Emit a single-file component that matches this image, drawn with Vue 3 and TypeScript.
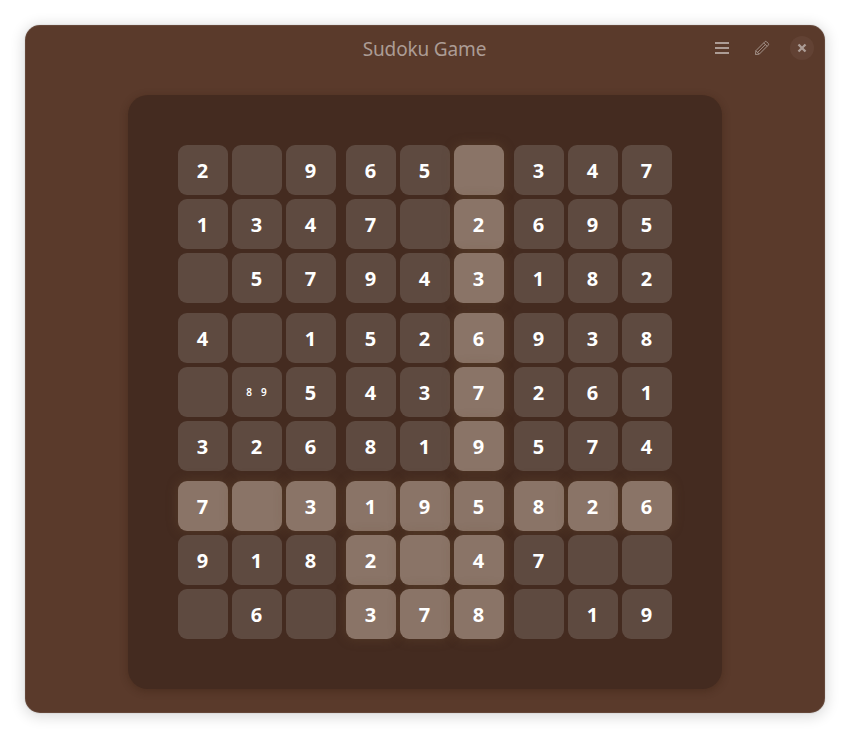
<script setup lang="ts">
interface Cell {
  value: string
  notes: string[]
  lit: boolean
}

const rows: string[] = [
  '2.965.347',
  '1347.2695',
  '.57943182',
  '4.1526938',
  '..5437261',
  '326819574',
  '7.3195826',
  '9182.47..',
  '.6.378.19',
]

const focus = { row: 6, col: 5 }
const notes: Record<string, string[]> = { '4-1': ['8', '9'] }

function isLit(r: number, c: number): boolean {
  const sameBlock =
    Math.floor(r / 3) === Math.floor(focus.row / 3) &&
    Math.floor(c / 3) === Math.floor(focus.col / 3)
  return r === focus.row || c === focus.col || sameBlock
}

const blocks: Cell[][] = Array.from({ length: 9 }, (_, b) =>
  Array.from({ length: 9 }, (_, i) => {
    const r = Math.floor(b / 3) * 3 + Math.floor(i / 3)
    const c = (b % 3) * 3 + (i % 3)
    const ch = rows[r][c]
    return { value: ch === '.' ? '' : ch, notes: notes[`${r}-${c}`] ?? [], lit: isLit(r, c) }
  }),
)
</script>

<template>
  <main class="desktop">
    <section class="window">
      <header class="titlebar">
        <h1 class="title">Sudoku Game</h1>
        <div class="actions">
          <button class="action" aria-label="Menu">
            <svg width="16" height="16" viewBox="0 0 16 16" fill="currentColor">
              <path d="M1 2h14v2H1zM1 7h14v2H1zM1 12h14v2H1z" />
            </svg>
          </button>
          <button class="action" aria-label="Edit notes">
            <svg width="16" height="16" viewBox="0 0 16 16" fill="none" stroke="currentColor" stroke-width="0.9" stroke-linejoin="round">
              <path d="M1.5 14.5l.4-3.8L10.9 1.7q.8-.7 1.6 0l1.8 1.8q.7.8 0 1.6L5.3 14.1zM1.9 10.7l3.4 3.4M9.7 2.9l3.4 3.4" />
              <path d="M3.6 12.4l7.8-7.8" stroke-width="0.8" />
            </svg>
          </button>
          <button class="action close" aria-label="Close">
            <svg width="16" height="16" viewBox="0 0 16 16" fill="none" stroke="currentColor" stroke-width="2.3" stroke-linecap="square">
              <path d="M5.3 5.3l5.4 5.4M10.7 5.3l-5.4 5.4" />
            </svg>
          </button>
        </div>
      </header>
      <div class="board">
        <div v-for="(block, b) in blocks" :key="b" class="block">
          <div v-for="(cell, i) in block" :key="i" class="cell" :class="{ lit: cell.lit }">
            <span v-if="cell.notes.length" class="notes">
              <span v-for="n in cell.notes" :key="n">{{ n }}</span>
            </span>
            <span v-else>{{ cell.value }}</span>
          </div>
        </div>
      </div>
    </section>
  </main>
</template>

<style>
body {
  background: #fff;
}
</style>

<style scoped>
.desktop {
  box-sizing: border-box;
  height: 738px;
  padding: 25px;
  overflow: hidden;
  font-family: "Noto Sans", sans-serif;
}
.window {
  box-sizing: border-box;
  width: 800px;
  height: 688px;
  border-radius: 15px;
  background: #5a3a2b;
  box-shadow: 0 2px 14px 2px rgba(0, 0, 0, 0.14), 0 0 0 1px rgba(0, 0, 0, 0.04), inset 0 0 0 1px rgba(255, 255, 255, 0.07);
}
.titlebar {
  display: grid;
  grid-template-columns: 1fr auto 1fr;
  align-items: center;
  height: 46px;
  padding: 0 11px;
  color: #ac9c95;
}
.title {
  grid-column: 2;
  margin: 2px 1px 0 0;
  font-size: 19px;
  line-height: 26px;
  font-weight: 400;
  letter-spacing: -0.15px;
}
.actions {
  display: flex;
  justify-content: flex-end;
  gap: 16px;
}
.action {
  display: flex;
  align-items: center;
  justify-content: center;
  width: 24px;
  height: 24px;
  padding: 0;
  border: 0;
  border-radius: 50%;
  background: transparent;
  color: inherit;
}
.close {
  background: #624234;
}
.board {
  display: grid;
  grid-template-columns: repeat(3, 158px);
  gap: 10px;
  width: 494px;
  margin: 24px auto 0;
  padding: 50px;
  border-radius: 20px;
  background: #442b20;
  box-shadow: 0 2px 8px rgba(40, 20, 5, 0.3);
}
.block {
  display: grid;
  grid-template-columns: repeat(3, 50px);
  grid-auto-rows: 50px;
  gap: 4px;
}
.cell {
  box-sizing: border-box;
  display: flex;
  align-items: center;
  justify-content: center;
  padding: 2px 1px 0 0;
  border-radius: 9px;
  background: #5e4a40;
  color: #fff;
  font-size: 20px;
  line-height: 28px;
  font-weight: 700;
}
.lit {
  background: #8a7467;
  box-shadow: 0 0 12px rgba(110, 82, 50, 0.38);
}
.notes {
  display: flex;
  gap: 9px;
  padding-bottom: 2px;
  font-size: 10px;
  line-height: 14px;
  font-weight: 600;
}
</style>
